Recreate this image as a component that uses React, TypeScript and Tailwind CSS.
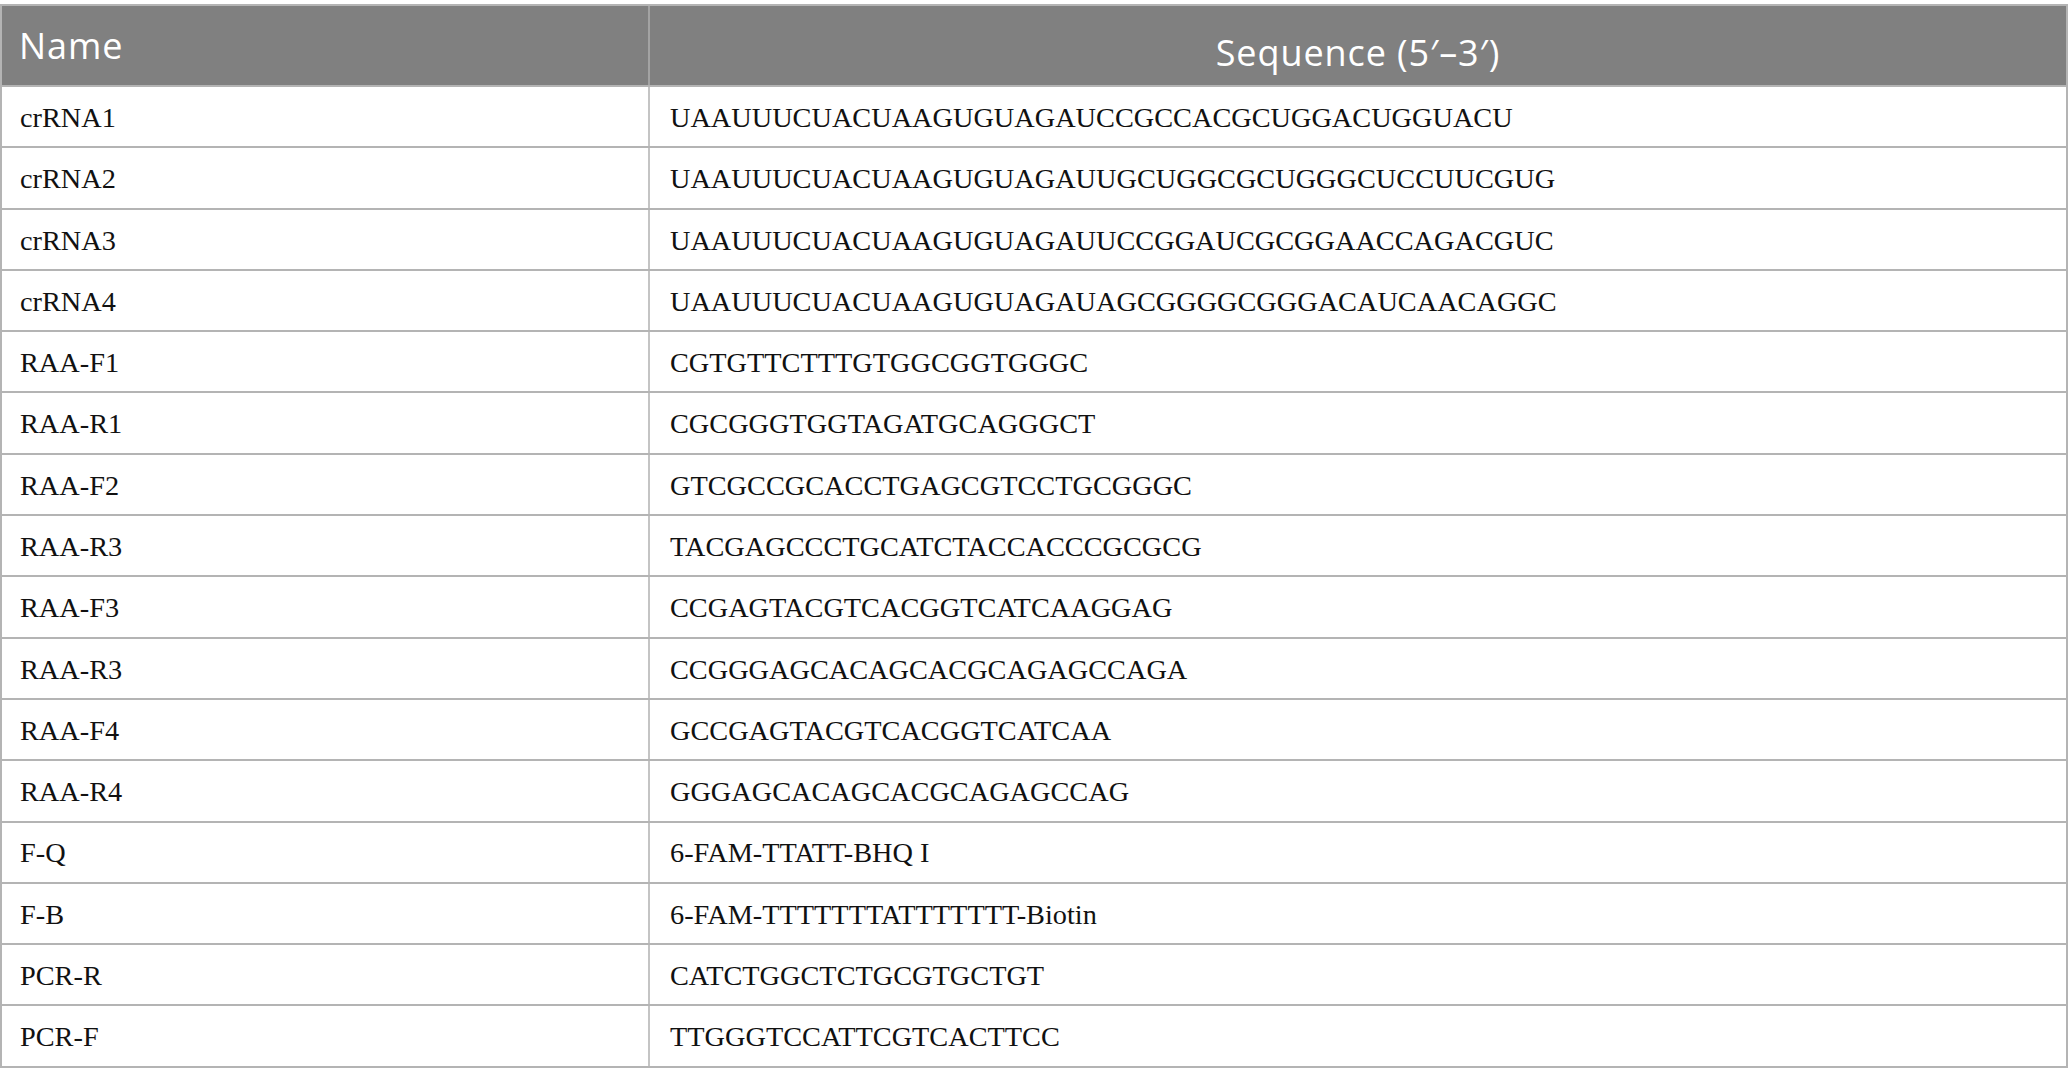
const rows: [string, string][] = [
  ['crRNA1', 'UAAUUUCUACUAAGUGUAGAUCCGCCACGCUGGACUGGUACU'],
  ['crRNA2', 'UAAUUUCUACUAAGUGUAGAUUGCUGGCGCUGGGCUCCUUCGUG'],
  ['crRNA3', 'UAAUUUCUACUAAGUGUAGAUUCCGGAUCGCGGAACCAGACGUC'],
  ['crRNA4', 'UAAUUUCUACUAAGUGUAGAUAGCGGGGCGGGACAUCAACAGGC'],
  ['RAA-F1', 'CGTGTTCTTTGTGGCGGTGGGC'],
  ['RAA-R1', 'CGCGGGTGGTAGATGCAGGGCT'],
  ['RAA-F2', 'GTCGCCGCACCTGAGCGTCCTGCGGGC'],
  ['RAA-R3', 'TACGAGCCCTGCATCTACCACCCGCGCG'],
  ['RAA-F3', 'CCGAGTACGTCACGGTCATCAAGGAG'],
  ['RAA-R3', 'CCGGGAGCACAGCACGCAGAGCCAGA'],
  ['RAA-F4', 'GCCGAGTACGTCACGGTCATCAA'],
  ['RAA-R4', 'GGGAGCACAGCACGCAGAGCCAG'],
  ['F-Q', '6-FAM-TTATT-BHQ I'],
  ['F-B', '6-FAM-TTTTTTTATTTTTTT-Biotin'],
  ['PCR-R', 'CATCTGGCTCTGCGTGCTGT'],
  ['PCR-F', 'TTGGGTCCATTCGTCACTTCC'],
];

export default function App() {
  return (
    <div className="min-h-screen bg-white pt-[4px]">
      <div className="border-t-2 border-x-2 border-[#b4b4b4]">
        {/* header */}
        <div className="grid grid-cols-[648px_1fr] h-[81px] bg-[#808080] border-b-2 border-[#b4b4b4] text-white font-['Open_Sans',sans-serif] text-[36px] tracking-[0.9px]">
          <div className="flex items-center pl-[17px] border-r-2 border-[#a3a3a3]">Name</div>
          <div className="flex items-center justify-center pt-[14px]">Sequence (5′–3′)</div>
        </div>

        {rows.map(([name, seq], i) => (
          <div
            key={i}
            className="grid grid-cols-[648px_1fr] h-[61.3px] border-b-2 border-[#b4b4b4] text-[#111] font-['Liberation_Serif','Times_New_Roman',serif] text-[28.3px]"
          >
            <div className="flex items-center pl-[18px] pt-[3px] border-r-2 border-[#c4c4c4]">{name}</div>
            <div className="flex items-center pl-[20px] pt-[3px]">{seq}</div>
          </div>
        ))}
      </div>
    </div>
  );
}
